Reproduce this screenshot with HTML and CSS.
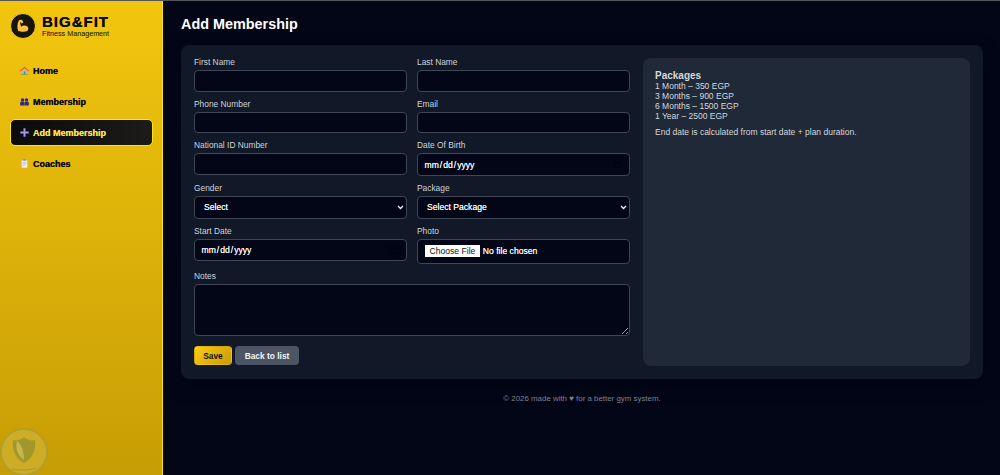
FILE: index.html
```html
<!DOCTYPE html>
<html lang="en">
<head>
<meta charset="utf-8">
<title>Add Membership</title>
<link rel="stylesheet" href="styles.css">
</head>
<body>
<div class="app">
  <aside class="sidebar">
    <div class="brand">
      <div class="brand-mark">
        <svg viewBox="0 0 24 24" width="18" height="18"><path class="arm" d="M6.500 4.500c2-1.500 4.500-1 5.200.8l.6 2.200-2.300 1-.8-1.400-1.200.6 1.400 5.300c2-2 6.500-2.300 8.500-.3 1.700 1.700 1.500 4.800-.3 6-1.500 1-8.500 1.300-11 .4C4 18 3.800 9 6.500 4.500z"/></svg>
      </div>
      <div class="brand-text">
        <div class="brand-name">BIG&amp;FIT</div>
        <div class="brand-sub">Fitness Management</div>
      </div>
    </div>
    <nav class="nav">
      <a class="nav-item" href="#">
        <svg class="nav-icon" viewBox="0 0 10 10"><rect x="2" y="4.500" width="6" height="4.500" fill="#d9b48a"/><rect x="4.200" y="6" width="1.700" height="3" fill="#3f8f9a"/><rect x="1" y="8.800" width="8" height="1" fill="#5fae62"/><path d="M0 5.200 5 .8l5 4.400-.8.700L5 2.300.8 5.900z" fill="#d8433f"/></svg>
        <span>Home</span>
      </a>
      <a class="nav-item" href="#">
        <svg class="nav-icon" viewBox="0 0 10 10"><g fill="#2f2780"><circle cx="2.800" cy="3.200" r="1.900"/><circle cx="7.200" cy="3.200" r="1.900"/><path d="M.2 9.500V6.500c0-1 1-1.600 2.600-1.600s2.100.6 2.100 1.600v3zM5.200 9.500v-3c0-1 .5-1.600 2-1.600s2.600.6 2.600 1.600v3z"/></g></svg>
        <span>Membership</span>
      </a>
      <a class="nav-item nav-item-active" href="#">
        <svg class="nav-icon" viewBox="0 0 10 10"><path d="M3.900.3h2.200v3.600h3.600v2.200H6.100v3.600H3.900V6.100H.3V3.900h3.600z" fill="#a593ea"/></svg>
        <span>Add Membership</span>
      </a>
      <a class="nav-item" href="#">
        <svg class="nav-icon" viewBox="0 0 10 10"><rect x="1.500" y="1" width="7" height="9" rx=".6" fill="#cfc8dc"/><rect x="2.300" y="2" width="5.400" height="7.300" fill="#f7f5fa"/><rect x="3.500" y=".2" width="3" height="1.600" fill="#8c87a0"/><path d="M3 3.800h4M3 5.300h4M3 6.800h3" stroke="#9a94ad" stroke-width=".6"/></svg>
        <span>Coaches</span>
      </a>
    </nav>
    <svg class="watermark" viewBox="0 0 48 48" width="48" height="48" aria-hidden="true">
      <circle cx="24" cy="24" r="23" fill="#d2ba48" fill-opacity=".5" stroke="#9c9a3e" stroke-opacity=".55" stroke-width="2"/>
      <path d="M13 12c4 1 8 0 11-3 3 3 7 4 11 3 1 10-2 18-11 23-9-5-12-13-11-23z" fill="#8f8f2e" fill-opacity=".7"/>
      <path d="M17 13c4 3 7 10 7 19-6-4-9-11-7-19z" fill="#d2c05a" fill-opacity=".75"/>
      <path d="M12 41c6 1.500 18 1.500 24-1" fill="none" stroke="#8f8f2e" stroke-opacity=".6"/>
    </svg>
  </aside>

  <main class="main">
    <h1 class="title">Add Membership</h1>
    <section class="card">
      <form class="form">
        <div class="field"><label class="label">First Name</label><input class="control" type="text"></div>
        <div class="field"><label class="label">Last Name</label><input class="control" type="text"></div>
        <div class="field"><label class="label">Phone Number</label><input class="control" type="text"></div>
        <div class="field"><label class="label">Email</label><input class="control" type="text"></div>
        <div class="field"><label class="label">National ID Number</label><input class="control" type="text"></div>
        <div class="field"><label class="label">Date Of Birth</label><input class="control control-date" type="date"></div>
        <div class="field"><label class="label">Gender</label><select class="control control-select"><option>Select</option></select></div>
        <div class="field"><label class="label">Package</label><select class="control control-select"><option>Select Package</option></select></div>
        <div class="field"><label class="label">Start Date</label><input class="control control-date" type="date"></div>
        <div class="field"><label class="label">Photo</label><input class="control control-file" type="file"></div>
        <div class="field field-wide"><label class="label">Notes</label><textarea class="control control-area"></textarea></div>
        <div class="actions field-wide">
          <button class="btn btn-save" type="button">Save</button>
          <button class="btn btn-back" type="button">Back to list</button>
        </div>
      </form>
      <div class="info">
        <h2 class="info-title">Packages</h2>
        <div>1 Month – 350 EGP</div>
        <div>3 Months – 900 EGP</div>
        <div>6 Months – 1500 EGP</div>
        <div>1 Year – 2500 EGP</div>
        <p class="info-note">End date is calculated from start date + plan duration.</p>
      </div>
    </section>
    <footer class="footer">© 2026 made with ♥ for a better gym system.</footer>
  </main>
</div>
</body>
</html>
```
FILE: styles.css
```css
* { box-sizing: border-box; }
html, body { margin: 0; height: 100%; overflow: hidden; }
body {
  background: #020617;
  border-top: 1px solid #55565a;
  font-family: "Liberation Sans", Arial, sans-serif;
  color: #e5e7eb;
}
.app { display: flex; height: 474px; }

.sidebar {
  position: relative;
  flex: 0 0 163px;
  background: linear-gradient(180deg, #f2c60e 0%, #c79d05 100%);
  border-right: 1px solid #ffdf20;
  padding: 12px 9px 0 10px;
  overflow: hidden;
}
.brand { display: flex; align-items: center; gap: 6px; }
.brand-mark {
  width: 26px; height: 26px; border-radius: 50%;
  background: #17140a;
  border: 1px solid #f5cf20;
  display: flex; align-items: center; justify-content: center;
}
.arm { fill: #fbc044; }
.brand-text { color: #0b0b0b; }
.brand-name { font-size: 15px; font-weight: 700; letter-spacing: 1px; line-height: 15px; text-shadow: 0 0 .5px currentColor; }
.brand-sub { font-size: 7.200px; line-height: 9px; }

.nav { display: flex; flex-direction: column; gap: 4px; margin-top: 18px; }
.nav-item {
  display: flex; align-items: center; gap: 4px;
  height: 27px; padding: 0 9px;
  border: 1px solid transparent; border-radius: 5px;
  color: #0b0b10; font-size: 9px; font-weight: 700; text-decoration: none;
  text-shadow: 0 0 .4px currentColor;
}
.nav-icon { width: 9px; height: 9px; flex: none; }
.nav-item-active {
  background: linear-gradient(90deg, #0b0b0d, #1c1b19);
  border-color: #ffe11a;
  color: #fde047;
}
.watermark { position: absolute; left: 0; bottom: -1px; }

.main { flex: 1; min-width: 0; padding: 0 17px 0 18px; }
.title { margin: 0; height: 44px; font-size: 14.400px; font-weight: 700; line-height: 47px; color: #fff; }
.card {
  display: grid; grid-template-columns: 4fr 3fr; gap: 13px;
  padding: 13px; height: 334px;
  background: #111827; border-radius: 8px;
  box-shadow: 0 6px 18px rgba(0, 0, 0, .35);
}
.form { display: grid; grid-template-columns: 1fr 1fr; column-gap: 10px; row-gap: 8px; align-content: start; align-items: start; }
.field { min-width: 0; }
.field-wide { grid-column: 1 / -1; }
.label { display: block; height: 12px; font-size: 8.400px; line-height: 9.600px; color: #cfd3da; }
.control {
  display: block; width: 100%; height: 21.700px; margin: 0;
  background: #020617; border: 1px solid #3f4754; border-radius: 4px;
  color: #f3f4f6; font-family: inherit; font-size: 8.600px; outline: none;
}
.control-date { height: 22.500px; padding: 0 5.500px; text-shadow: 0 0 .2px currentColor; }
.control-date::-webkit-calendar-picker-indicator { opacity: .45; }
.control-select {
  height: 22.700px; padding: 0 9px;
  appearance: none;
  background-image: url("data:image/svg+xml,%3Csvg xmlns='http://www.w3.org/2000/svg' width='7' height='5' viewBox='0 0 7 5'%3E%3Cpath d='M1 1l2.500 2.500L6 1' fill='none' stroke='%23f3f4f6' stroke-width='1.300'/%3E%3C/svg%3E");
  background-repeat: no-repeat;
  background-position: right 2.500px center;
  text-shadow: 0 0 .3px currentColor;
}
.control-file { height: 25px; padding: 5px 7px; text-shadow: 0 0 .2px currentColor; }
.control-file::file-selector-button {
  height: 12.600px; padding: 0 4.500px; margin-right: 3px;
  background: #fff; border: 0; color: #111; font: inherit;
}
.control-area { height: 52.300px; resize: vertical; }

.actions { display: flex; gap: 3px; margin-top: 2.500px; }
.btn {
  height: 19px; padding: 0; border: 1px solid transparent; border-radius: 4px;
  font-family: inherit; font-size: 8.400px; font-weight: 700;
}
.btn-save { width: 38px; background: linear-gradient(135deg, #facc15, #ca9a04); color: #111; }
.btn-back { width: 64px; background: #4b5563; color: #f3f4f6; }

.info {
  padding: 12px;
  background: #1f2937; border-radius: 8px;
  font-size: 8.500px; line-height: 10px; color: #d5d8dd;
}
.info-title { margin: 0; font-size: 10px; font-weight: 700; line-height: 11px; }
.info-note { margin: 6px 0 0; }

.footer { margin-top: 15px; text-align: center; font-size: 7.900px; line-height: 10px; color: #7d8291; }
```
